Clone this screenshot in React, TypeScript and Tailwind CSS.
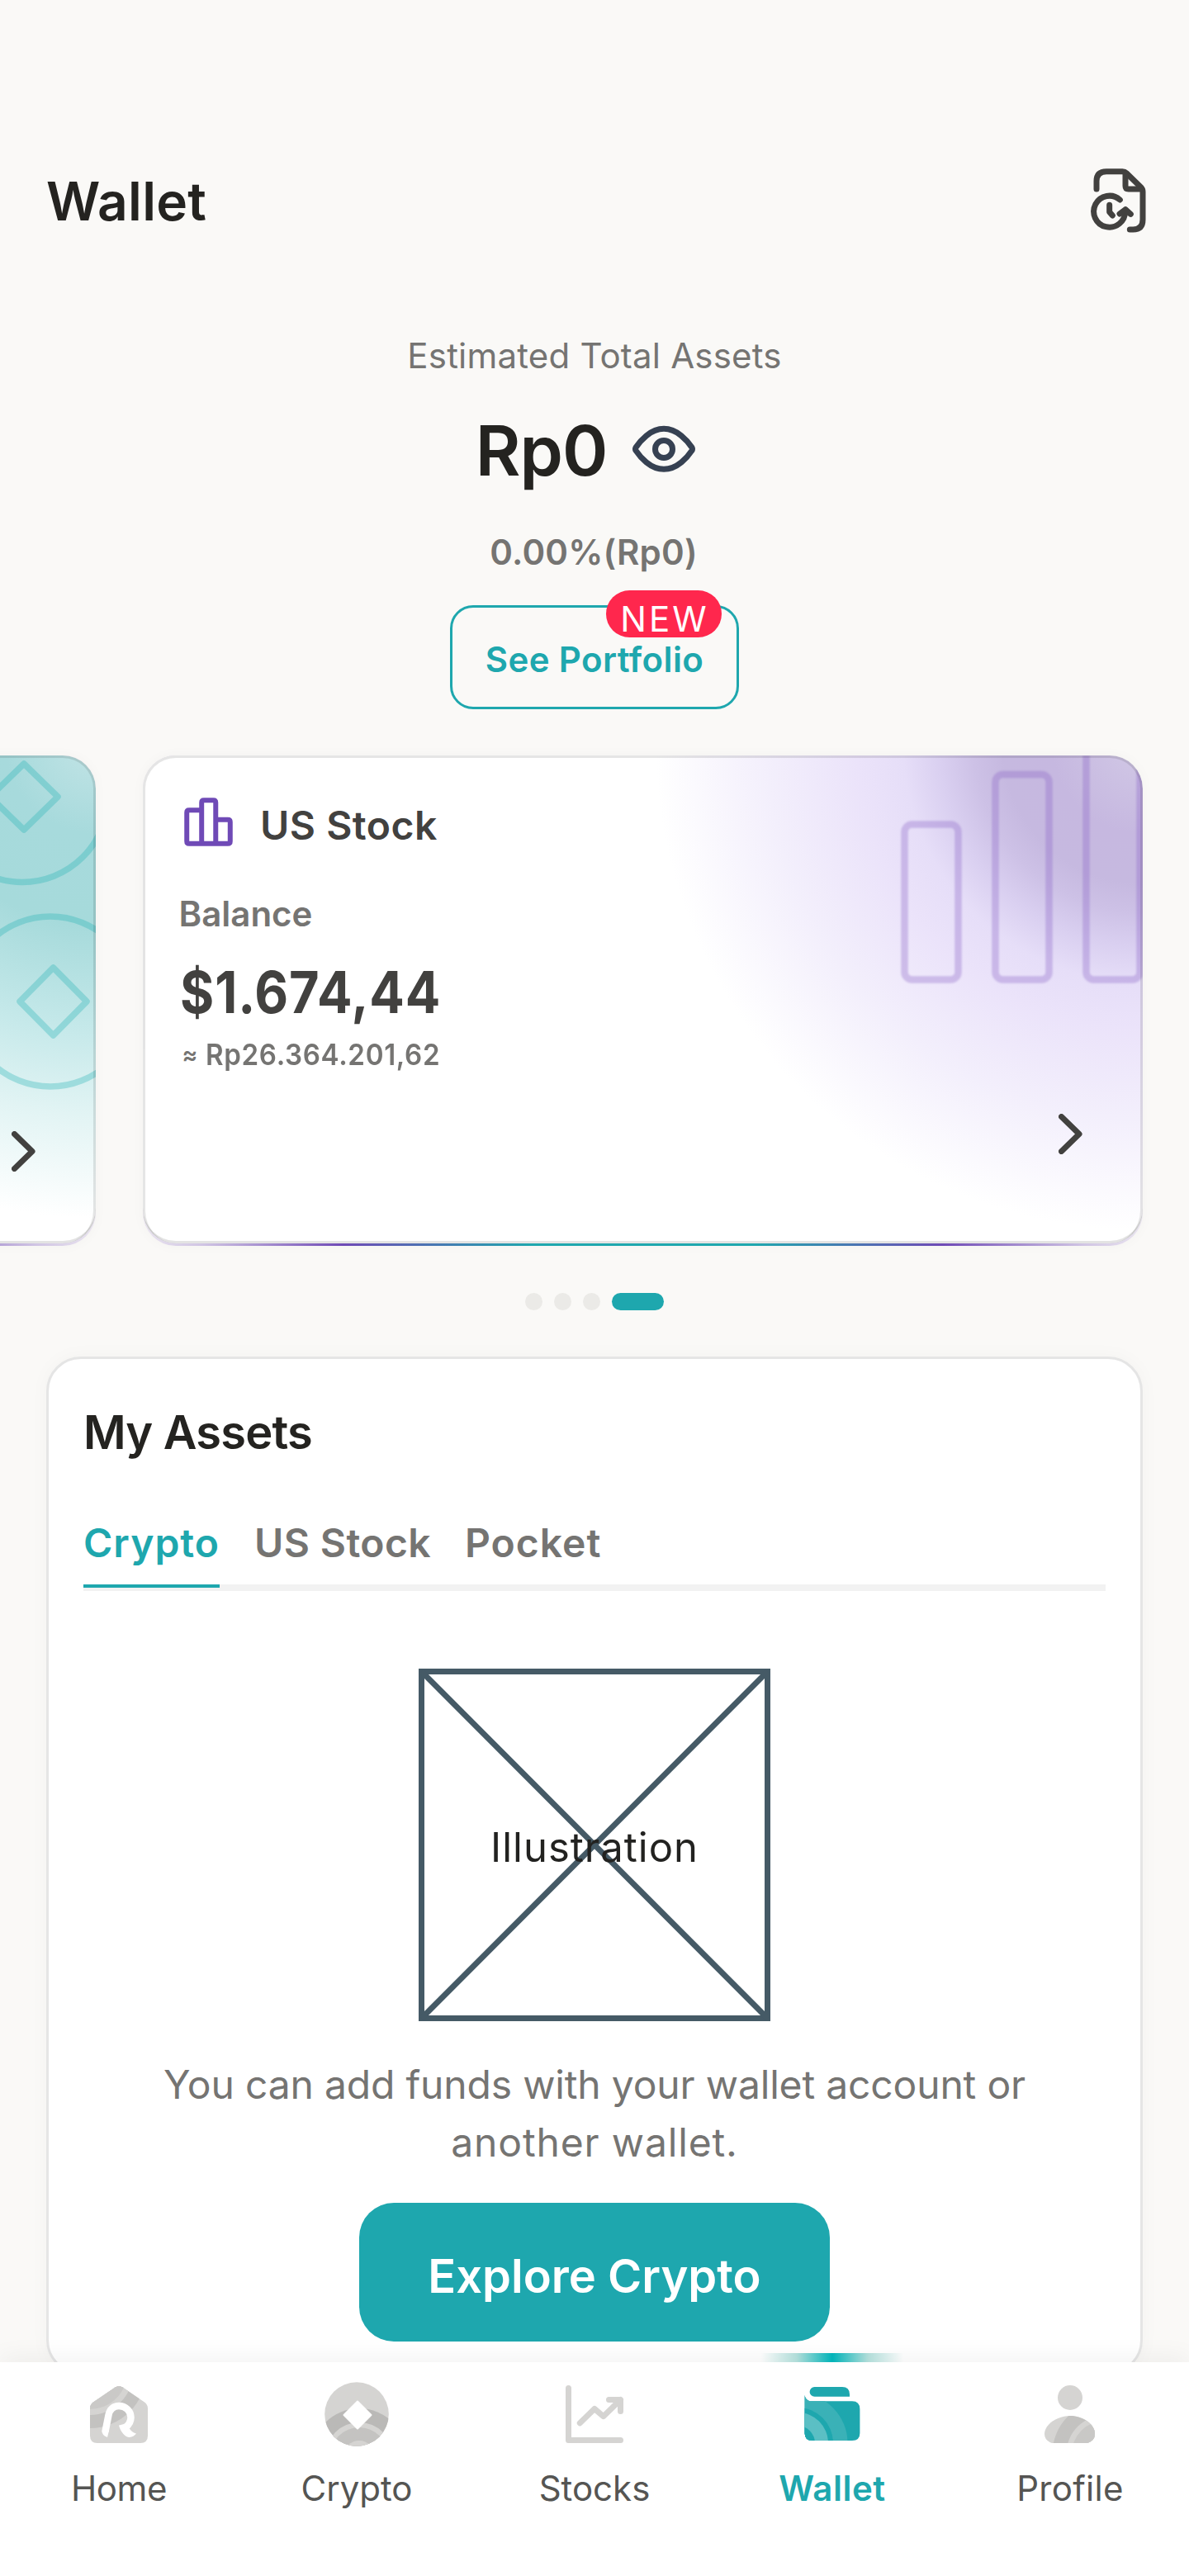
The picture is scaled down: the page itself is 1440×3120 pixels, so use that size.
import type { ReactNode } from "react";

function HistoryIcon() {
  return (
    <svg viewBox="120 60 216 252" className="h-[84px] w-[72px]" fill="none" stroke="#42413f" strokeWidth="21" strokeLinecap="round" strokeLinejoin="round">
      <path d="M144 147V118Q144 83 180 83H238Q247 83 253 89L306 141Q312 147 312 157V258Q312 294 277 294H265" />
      <path d="M249 90V136Q249 147 260 147H306" />
      <path d="M229 186A57 57 0 1 0 248 227" />
      <path d="M228 237L249 221L268 238" />
      <path d="M191 205V230L202 243" />
    </svg>
  );
}

function EyeIcon() {
  return (
    <svg viewBox="36 36 252 192" className="h-[64px] w-[84px]" fill="none" stroke="#364152" strokeWidth="21" strokeLinejoin="round">
      <path d="M60 126C76 102 113 58 162 58S248 102 264 126Q267 131 264 137C248 161 211 205 162 205S76 161 60 137Q57 131 60 126Z" />
      <circle cx="162" cy="132" r="31.5" />
    </svg>
  );
}

function StockCardIcon() {
  return (
    <svg viewBox="486 144 128 128" className="h-[59px] w-[59px]" fill="none" stroke="#6f4ab6" strokeWidth="13" strokeLinejoin="round">
      <path d="M532 177H499Q493 177 493 183V259Q493 265 499 265H601Q607 265 607 259V208Q607 202 601 202H569" />
      <path d="M532 265V157Q532 151 538 151H563Q569 151 569 157V265" />
    </svg>
  );
}

function Chevron() {
  return (
    <svg viewBox="0 0 29 49" className="h-[49px] w-[29px]" fill="none" stroke="#42413f" strokeWidth="7" strokeLinecap="round" strokeLinejoin="round">
      <path d="M3.5 3.5L25 24.5L3.5 45.5" />
    </svg>
  );
}

function CoinPattern() {
  return (
    <svg viewBox="0 0 116 420" className="absolute top-0 right-0 h-[420px] w-[116px] blur-[0.6px]" fill="none" stroke="#22b0b3" strokeOpacity="0.32" strokeWidth="7.5" strokeLinejoin="round">
      <circle cx="27" cy="50" r="103.5" />
      <path d="M29 10L70 50L29 90L-12 50Z" />
      <circle cx="61" cy="298" r="103" />
      <path d="M64.500 257L105 298L64.500 339L24 298Z" />
    </svg>
  );
}

function BarsPattern() {
  return (
    <svg viewBox="0 0 300 285" className="absolute top-0 right-0 h-[285px] w-[300px] blur-[1px]" fill="none" stroke="#8a62c4" strokeOpacity="0.33" strokeWidth="8.5">
      <rect x="11.500" y="83.500" width="65" height="188" rx="9" />
      <rect x="121.500" y="23" width="65" height="248.500" rx="9" />
      <rect x="231.500" y="-20" width="65" height="291.500" rx="9" />
    </svg>
  );
}

function WalletCard({ background, pattern, chevronBottom, children }: { background: string; pattern: ReactNode; chevronBottom: string; children?: ReactNode }) {
  return (
    <article className="h-[594px] w-[1211px] shrink-0 rounded-[40px] bg-[linear-gradient(90deg,rgba(111,74,182,0.12)_0%,rgba(111,74,182,0.3)_6%,#6f4ab6_20%,#1ea7ae_39%,#1ea7ae_61%,#6f4ab6_80%,rgba(111,74,182,0.3)_94%,rgba(111,74,182,0.12)_100%)] shadow-[0_0_16px_rgba(0,0,0,0.03)]">
      <div className="relative h-[591px] overflow-hidden rounded-[40px] bg-[#e3e3e3]">
        <div className={`relative h-[588px] overflow-hidden rounded-[40px] ${background}`}>
          {pattern}
          {children}
        </div>
        <div className="absolute inset-x-0 top-0 h-[591px] rounded-[40px] border-[3px] border-b-0 border-black/10" />
        <div className={`absolute right-[73px] ${chevronBottom}`}>
          <Chevron />
        </div>
      </div>
    </article>
  );
}

function HomeIcon() {
  return (
    <svg viewBox="0 0 84 84" className="size-[84px]">
      <defs>
        <clipPath id="home-shape">
          <path d="M37.500 9.500Q42 6.500 46.500 9.500L73 27.500Q77 30.500 77 35V68Q77 77 68 77H16Q7 77 7 68V35Q7 30.500 11 27.500Z" />
        </clipPath>
      </defs>
      <g clipPath="url(#home-shape)">
        <rect width="84" height="84" fill="#d5d4d2" />
        <circle cx="7" cy="-9" r="68" fill="#c3c2c0" />
        <circle cx="7" cy="-9" r="52" fill="#d5d4d2" />
        <circle cx="7" cy="-9" r="45" fill="#cac9c7" />
      </g>
      <path d="M25.500 63L29.500 43C31 35.500 36 32 42 32C50 32 56.500 38 56.500 46C56.500 51 54 55 50 58" fill="none" stroke="#fff" strokeWidth="8.500" />
      <path d="M42 55.500L52 53C54 59 57 64 63 65.500C60 69.500 55 71 51 69C46 66 43 60 42 55.500Z" fill="#fff" />
      <path d="M21.300 62L30 62L28 70Q21 67 21.300 62Z" fill="#fff" />
    </svg>
  );
}

function CryptoIcon() {
  return (
    <svg viewBox="0 0 84 84" className="size-[84px]">
      <defs>
        <clipPath id="coin-shape">
          <circle cx="42" cy="42" r="38.800" />
        </clipPath>
      </defs>
      <g clipPath="url(#coin-shape)">
        <rect width="84" height="84" fill="#d5d4d2" />
        <circle cx="45" cy="93" r="58" fill="#bab9b7" />
        <circle cx="45" cy="93" r="41" fill="#d5d4d2" />
        <circle cx="45" cy="93" r="35" fill="#c4c3c1" />
        <circle cx="45" cy="93" r="19" fill="#d5d4d2" />
      </g>
      <path d="M43 26.500L59.500 43L43 59.500L26.500 43Z" fill="#fff" stroke="#fff" strokeWidth="2" strokeLinejoin="round" />
    </svg>
  );
}

function StocksIcon() {
  return (
    <svg viewBox="0 0 84 84" className="size-[84px]" fill="none" stroke="#d5d4d2" strokeWidth="7" strokeLinecap="round" strokeLinejoin="round">
      <path d="M10.500 10.500V73.500H73.500" />
      <path d="M24.300 52.700L42 35.500L52.700 44.700L73.500 24.500M59.500 24.500H73.500V38.500" />
    </svg>
  );
}

function WalletIcon() {
  return (
    <svg viewBox="0 0 84 84" className="size-[84px]">
      <defs>
        <clipPath id="wallet-shape">
          <path d="M8.600 18.500C9 23 12 26.300 17 26.300H66Q75.400 26.300 75.400 36V65Q75.400 74 66 74H18Q8.600 74 8.600 65Z" />
        </clipPath>
      </defs>
      <path d="M20.500 9H54Q63 9 63 18V20.800H20.500A5.900 5.900 0 0 1 20.500 9Z" fill="#1ea7ae" />
      <g clipPath="url(#wallet-shape)">
        <rect width="84" height="84" fill="#1ea7ae" />
        <circle cx="0" cy="77" r="60.500" fill="#3ab1b7" />
        <circle cx="0" cy="77" r="43" fill="#1ea7ae" />
        <circle cx="0" cy="77" r="37" fill="#5bbfc4" />
        <circle cx="0" cy="77" r="21" fill="#1ea7ae" />
      </g>
    </svg>
  );
}

function ProfileIcon() {
  return (
    <svg viewBox="0 0 84 84" className="size-[84px]">
      <defs>
        <clipPath id="profile-shape">
          <path d="M20 77Q11 74 11 66C11 54 27 44 42 44S72 54 72 66Q72 74 63 77Z" />
        </clipPath>
      </defs>
      <circle cx="42" cy="22" r="15" fill="#d5d4d2" />
      <g clipPath="url(#profile-shape)">
        <rect width="84" height="84" fill="#d5d4d2" />
        <circle cx="84" cy="90" r="63.500" fill="#c3c2c0" />
        <circle cx="84" cy="90" r="46.500" fill="#d5d4d2" />
        <circle cx="84" cy="90" r="40" fill="#c9c8c6" />
      </g>
    </svg>
  );
}

const navItems = [
  { label: "Home", icon: <HomeIcon />, tracking: "tracking-[-0.4px]" },
  { label: "Crypto", icon: <CryptoIcon />, tracking: "tracking-normal" },
  { label: "Stocks", icon: <StocksIcon />, tracking: "tracking-normal" },
  { label: "Wallet", icon: <WalletIcon />, tracking: "tracking-[0.5px]", active: true },
  { label: "Profile", icon: <ProfileIcon />, tracking: "tracking-[0.3px]" },
];

function BottomNav() {
  return (
    <nav className="relative flex h-[259px] shrink-0 bg-white shadow-[0_-6px_28px_rgba(0,0,0,0.05)]">
      {navItems.map((item) => (
        <a key={item.label} className="relative flex flex-1 flex-col items-center pt-[21px]">
          {item.active && (
            <span className="absolute top-[-11px] h-[11px] w-[172px] bg-[linear-gradient(90deg,rgba(176,220,216,0)_0%,#b0dcd8_25%,#00b3b8_50%,#b0dcd8_75%,rgba(176,220,216,0)_100%)]" />
          )}
          {item.icon}
          <span
            className={`mt-[20px] text-[42px] leading-[56px] ${item.tracking} ${
              item.active ? "font-semibold text-[#1ea7ae]" : "font-normal text-[#555553]"
            }`}
          >
            {item.label}
          </span>
        </a>
      ))}
    </nav>
  );
}

function Summary() {
  return (
    <section className="flex flex-col items-center">
      <p className="mt-[111px] text-[42px] leading-[56px] tracking-[0.2px] text-[#757472]">Estimated Total Assets</p>
      <div className="mt-[37px] flex h-[100px] items-center gap-[27px] pr-[18px]">
        <span className="text-[84px] leading-[100px] font-semibold tracking-[-1px] text-[#242320]">Rp0</span>
        <div className="pb-1">
          <EyeIcon />
        </div>
      </div>
      <p className="mt-[45px] pr-0.5 text-[42px] leading-[56px] font-semibold tracking-[0.2px] text-[#757472]">0.00%(Rp0)</p>
      <button className="relative mt-[36px] flex h-[126px] w-[350px] items-center justify-center rounded-[28px] border-[3.5px] border-[#1ea7ae] pt-[6px] text-[42px] leading-[56px] font-semibold tracking-[0.4px] text-[#1ea7ae]">
        See Portfolio
        <span className="absolute top-[-21px] right-[18px] flex h-[57px] w-[140px] items-center justify-center rounded-full bg-[#ff274d] pt-[13px] pl-[2px] text-[42px] leading-[44px] font-normal tracking-[3px] text-white">
          NEW
        </span>
      </button>
    </section>
  );
}

function Carousel() {
  return (
    <section className="mt-[56px] -ml-[1095px] flex gap-[57px]">
      <WalletCard
        background="bg-[radial-gradient(circle_at_1211px_-15px,#c3e4e6_0px,#a7dadc_110px,#a6dadb_220px,#c6e9ea_350px,#e2f4f4_450px,#ffffff_575px)]"
        pattern={<CoinPattern />}
        chevronBottom="bottom-[87px]"
      />
      <WalletCard
        background="bg-[radial-gradient(circle_at_1211px_-15px,#d2c9e6_0px,#c6b8e0_110px,#c6b9e0_170px,#cdc1e6_205px,#d9cff0_245px,#e6def8_290px,#ebe3fa_345px,#f3effc_455px,#ffffff_590px)]"
        pattern={<BarsPattern />}
        chevronBottom="bottom-[108px]"
      >
        <div className="relative flex flex-col pl-[43.5px]">
          <div className="mt-[51px] flex h-[69px] gap-[33px] pl-[6.5px]">
            <StockCardIcon />
            <h2 className="mt-[4px] text-[48px] leading-[59px] font-semibold tracking-[0.5px] text-[#42413f]">US Stock</h2>
          </div>
          <p className="mt-[46px] text-[42px] leading-[52px] font-semibold text-[#757472]">Balance</p>
          <p className="mt-[29px] ml-[1.5px] origin-left scale-x-[0.9] text-[70px] leading-[80px] font-bold tracking-[1px] text-[#42413f]">$1.674,44</p>
          <p className="mt-[13px] flex pl-[4px] text-[36px] leading-[44px] font-semibold text-[#757472]">
            <span className="w-[28px] text-[28px]">≈</span>
            <span className="origin-left scale-x-[0.92] tracking-[0.7px]">Rp26.364.201,62</span>
          </p>
        </div>
      </WalletCard>
    </section>
  );
}

function Assets() {
  return (
    <section className="mx-auto mt-[56px] h-[1233px] w-[1328px] shrink-0 rounded-[42px] border-[3px] border-[#e5e5e5] bg-white px-[42px] pt-[53px] shadow-[0_0_24px_rgba(0,0,0,0.03)]">
      <h2 className="text-[56px] leading-[72px] font-semibold tracking-[-0.8px] text-[#242320]">My Assets</h2>
      <div className="mt-[66px] flex h-[90px] w-[1238px] gap-[42px] border-b-[8px] border-[#f2f2f2] text-[48px] leading-[64px] font-semibold text-[#757472]">
        <span className="h-[86px] w-[165px] shrink-0 border-b-[4px] border-[#1ea7ae] tracking-[1px] text-[#1ea7ae]">Crypto</span>
        <span className="w-[213px] tracking-[0.4px] whitespace-nowrap">US Stock</span>
        <span className="tracking-[1px]">Pocket</span>
      </div>
      <div className="flex flex-col items-center pt-[94px]">
        <div className="relative flex h-[427px] w-[426px] items-center justify-center">
          <svg viewBox="0 0 426 427" className="absolute inset-0 h-full w-full" fill="none" stroke="#455a66" strokeWidth="7">
            <rect x="3.500" y="3.500" width="419" height="420" />
            <path d="M3.500 3.500L422.500 423.500M422.500 3.500L3.500 423.500" />
          </svg>
          <span className="relative pt-[7px] text-[49px] leading-[64px] tracking-[1px] text-[#222220]">Illustration</span>
        </div>
        <p className="mt-[42px] flex flex-col items-center text-[48px] leading-[70px] text-[#757472]">
          <span className="tracking-[-0.17px]">You can add funds with your wallet account or</span>
          <span className="tracking-[0.85px]">another wallet.</span>
        </p>
        <button className="mt-[38px] h-[168px] w-[570px] rounded-[42px] bg-[#1ea7ae] pt-[9px] text-[56px] leading-[72px] font-semibold text-white">
          Explore Crypto
        </button>
      </div>
    </section>
  );
}

export default function App() {
  return (
    <main className="flex h-[3120px] w-[1440px] flex-col overflow-hidden bg-[#faf9f7] font-['Inter',sans-serif]">
      <div className="h-[2861px] shrink-0 overflow-hidden">
        <header className="flex h-[292px] items-center justify-between pt-[196px] pr-[48px] pl-[56px]">
          <h1 className="text-[64px] leading-[96px] font-semibold tracking-[0.3px] text-[#242320]">Wallet</h1>
          <div className="pb-1">
            <HistoryIcon />
          </div>
        </header>
        <Summary />
        <Carousel />
        <div className="mt-[57px] flex justify-center gap-[14px]">
          <span className="size-[21px] rounded-full bg-[#ebeae7]" />
          <span className="size-[21px] rounded-full bg-[#ebeae7]" />
          <span className="size-[21px] rounded-full bg-[#ebeae7]" />
          <span className="h-[21px] w-[63px] rounded-full bg-[#1ea7ae]" />
        </div>
        <Assets />
      </div>
      <BottomNav />
    </main>
  );
}
